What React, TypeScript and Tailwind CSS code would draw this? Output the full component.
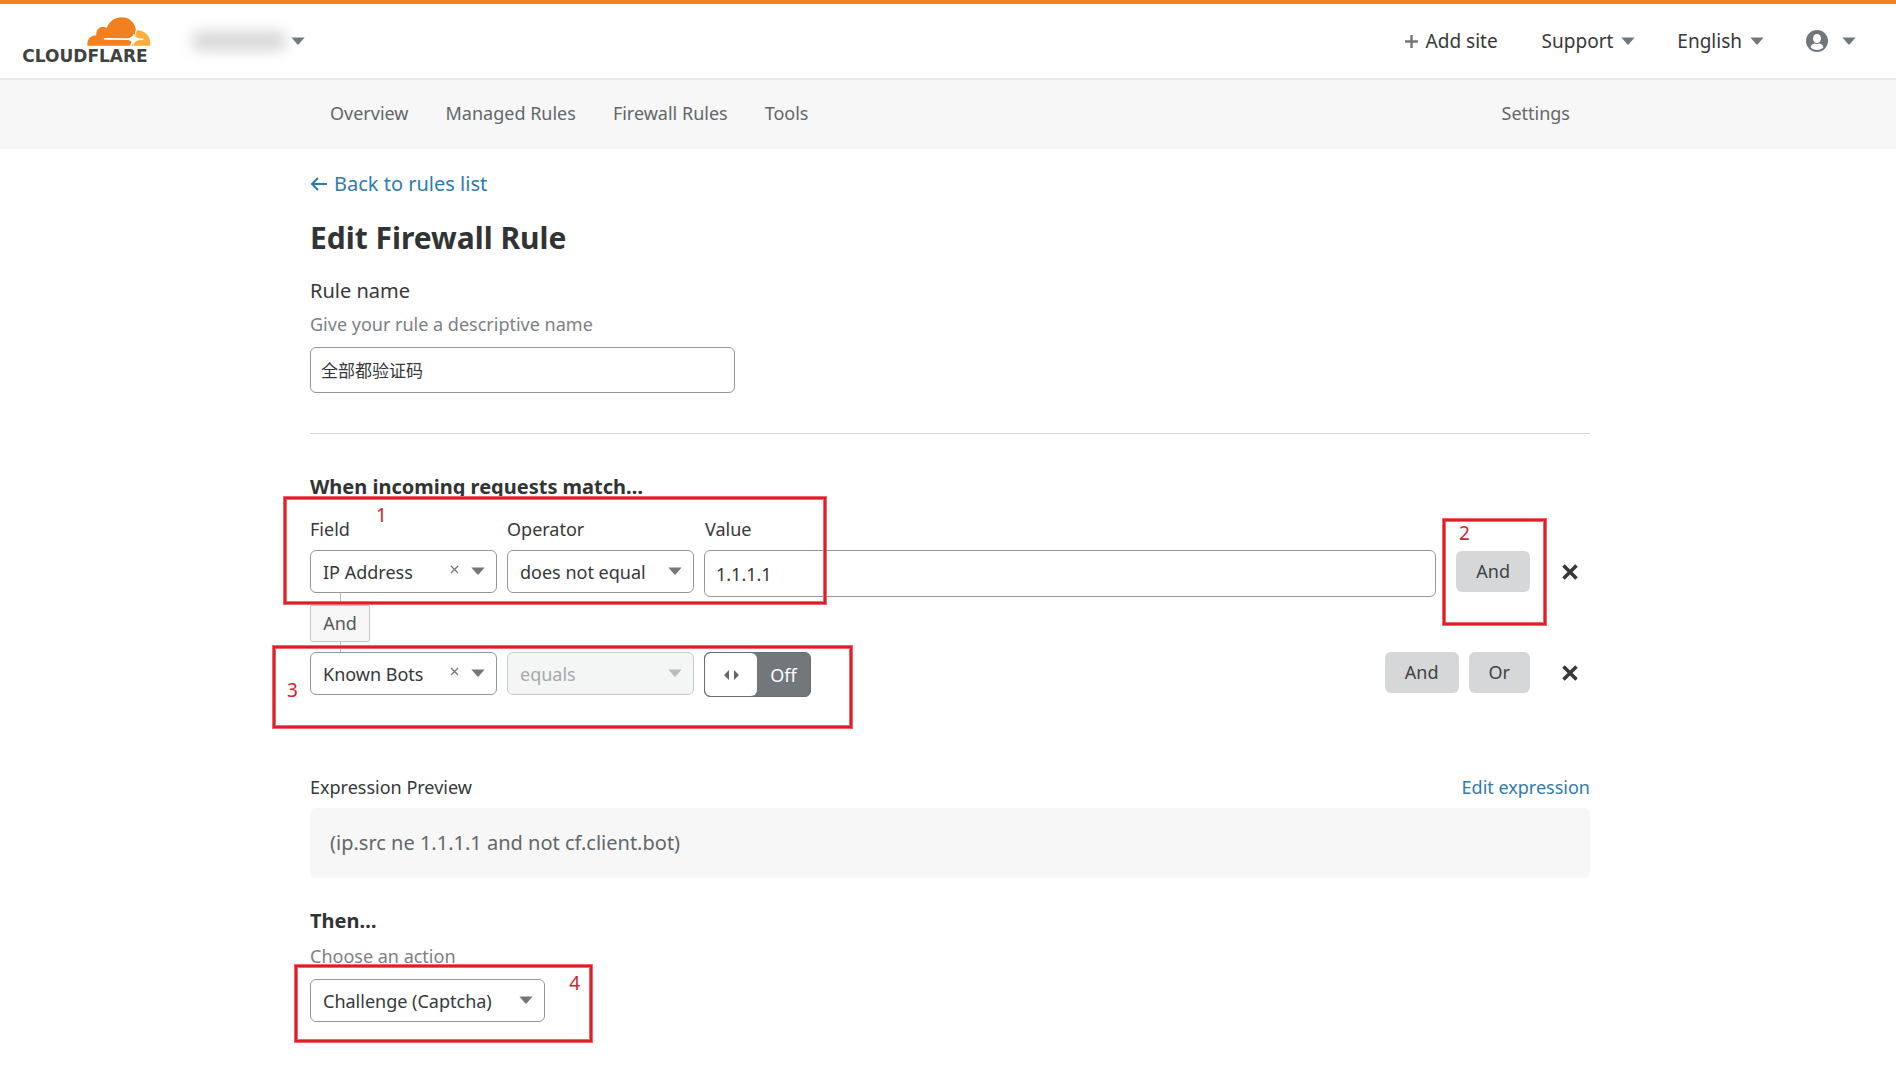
import type { ReactNode } from "react";

function Caret({ className = "" }: { className?: string }) {
  return (
    <svg aria-hidden="true" viewBox="0 0 14 8" className={`h-2 w-3.5 shrink-0 fill-current ${className}`}>
      <path d="M0.4 0.5h13.2L8 7.1a1.3 1.3 0 0 1-2 0z" />
    </svg>
  );
}

function Logo() {
  return (
    <a href="#home" aria-label="Cloudflare" className="flex w-33 flex-col">
      <svg aria-hidden="true" viewBox="262 50 192 88" className="h-[29px] w-16 self-end">
        <path
          fill="#f38020"
          d="M262 137.500C260 118 271 105 289 105C288 86 304 74 321 83C329 62 346 51 366 51C388 51 405 65 409 87L405 106L400 118L394 130L391 137.500Z"
        />
        <path fill="#faae40" d="M412 90C436 90 453 107 453 129V137.500H397L401 128L404 118L408 104Z" />
        <path
          fill="#fff"
          d="M312 116.500C312 114.500 314 114 317 114L384 114.500C393 114 399 110 403 101C406 110 411 114 419 114.500L430 115.500C434 116 434 119 430 119.500L418 120.500C410 122 405 126 401 135C398 126 394 121 385 120L317 119C314 119 312 118.500 312 116.500Z"
        />
      </svg>
      <span className="self-center font-['DejaVu_Sans'] text-[17px] leading-5 font-bold text-[#404242]">
        CLOUDFLARE
      </span>
    </a>
  );
}

function Select({
  label,
  id,
  value,
  width,
  disabled = false,
  clearable = false,
}: {
  label: string;
  id: string;
  value: string;
  width: string;
  disabled?: boolean;
  clearable?: boolean;
}) {
  return (
    <div className={`relative shrink-0 ${width}`}>
      <select
        id={id}
        aria-label={label}
        disabled={disabled}
        defaultValue={value}
        className="h-[43px] w-full appearance-none rounded-md border border-[#92979b] bg-white pt-0.5 pr-8 pl-3 text-[18px] text-[#36393a] disabled:border-[#c9cccd] disabled:bg-[#f4f5f5] disabled:text-[#a5a9ab] disabled:opacity-100"
      >
        <option>{value}</option>
      </select>
      {clearable && (
        <button type="button" aria-label={`Clear ${value}`} className="absolute top-[15px] right-9.5 text-[#72777b]">
          <svg aria-hidden="true" viewBox="0 0 9 9" className="size-[9px] stroke-current" strokeWidth="1.3">
            <path d="M1 1l7 7M8 1l-7 7" />
          </svg>
        </button>
      )}
      <Caret
        className={`pointer-events-none absolute top-[17px] right-3 ${disabled ? "text-[#b9bcbe]" : "text-[#72777b]"}`}
      />
    </div>
  );
}

function GreyButton({ children }: { children: ReactNode }) {
  return (
    <button type="button" className="h-[41px] rounded-md bg-[#d5d7d8] px-5 text-[18px] text-[#404344]">
      {children}
    </button>
  );
}

function RemoveButton() {
  return (
    <button type="button" aria-label="Remove condition" className="ml-8 text-[#36393a]">
      <svg aria-hidden="true" viewBox="0 0 16 16" className="size-4 stroke-current" strokeWidth="3.6">
        <path d="M1.500 1.500l13 13M14.500 1.500l-13 13" />
      </svg>
    </button>
  );
}

function Marker({ box, digit, children }: { box: string; digit: string; children: string }) {
  return (
    <div
      className={`pointer-events-none absolute border-2 border-[#dc1f26] ring-1 ring-[#f0666a] inset-ring inset-ring-[#f0666a] ${box}`}
    >
      <span className={`absolute font-['Noto_Sans'] text-[19px] leading-5 text-[#d0242b] ${digit}`}>{children}</span>
    </div>
  );
}

export default function App() {
  return (
    <div className="min-h-screen bg-white font-['Noto_Sans','Noto_Sans_CJK_SC',sans-serif] text-[18px] text-[#36393a]">
      <header className="flex h-20 items-center justify-between border-t-4 border-b-2 border-t-[#f38020] border-b-[#ebebeb] pr-10 pl-[19px]">
        <div className="flex items-center">
          <Logo />
          <button type="button" aria-label="Select account" className="ml-10 flex items-center gap-1 text-[#72777b]">
            <span className="h-5 w-24 rounded-full bg-[#d8d8d8] blur-[7px]" />
            <Caret />
          </button>
        </div>
        <nav aria-label="Account" className="flex items-center text-[19px]">
          <a href="#add-site" className="flex items-center gap-2">
            <svg aria-hidden="true" viewBox="0 0 13 13" className="size-[13px] stroke-[#72777b]" strokeWidth="2.400">
              <path d="M6.500 0v13M0 6.500h13" />
            </svg>
            Add site
          </a>
          <button type="button" className="ml-11 flex items-center gap-2">
            Support <Caret className="text-[#72777b]" />
          </button>
          <button type="button" className="ml-10.5 flex items-center gap-2">
            English <Caret className="text-[#72777b]" />
          </button>
          <button type="button" aria-label="Profile" className="ml-10.5 flex items-center gap-3.5 text-[#72777b]">
            <svg aria-hidden="true" viewBox="0 0 22 22" className="size-[22px]">
              <circle cx="11" cy="11" r="11" fill="currentColor" />
              <ellipse cx="11" cy="8.600" rx="4" ry="4.600" fill="#fff" />
              <path d="M4.600 17.200c.6-2.600 2.600-3.400 4.400-3.700 1.200.7 2.800.7 4 0 1.800.3 3.800 1.100 4.400 3.700-3.200 3.600-9.600 3.600-12.800 0z" fill="#fff" />
            </svg>
            <Caret />
          </button>
        </nav>
      </header>

      <div className="bg-[#f7f7f7] pl-1 text-[#62676a]">
        <nav aria-label="Firewall" className="mx-auto flex h-[69px] max-w-[1280px] items-center gap-[37px] px-5 pb-0.5">
          <a href="#overview">Overview</a>
          <a href="#managed">Managed Rules</a>
          <a href="#firewall">Firewall Rules</a>
          <a href="#tools">Tools</a>
          <a href="#settings" className="ml-auto">
            Settings
          </a>
        </nav>
      </div>

      <main className="pt-[21px] pb-10 pl-1">
        <form className="mx-auto max-w-[1280px]">
          <a href="#rules" className="flex items-center gap-1.5 text-[20px] leading-7 text-[#2f7bab]">
            <svg aria-hidden="true" viewBox="0 0 18 16" className="h-4 w-[18px] fill-none stroke-current" strokeWidth="2">
              <path d="M17 8H2.500M8 2L2 8l6 6" />
            </svg>
            Back to rules list
          </a>
          <h1 className="mt-5 text-[30px] leading-10 font-bold text-[#313435]">Edit Firewall Rule</h1>
          <label htmlFor="rule-name" className="mt-[19px] block text-[20px] leading-7">
            Rule name
          </label>
          <p className="mt-[7px] leading-6 text-[#7c8185]">Give your rule a descriptive name</p>
          <input
            id="rule-name"
            type="text"
            defaultValue="全部都验证码"
            className="mt-[11px] block h-[46px] w-[425px] rounded-md border border-[#92979b] px-2.5 pb-0.5 text-[17px]"
          />
          <hr className="mt-10 border-[#d5d7d8]" />

          <h2 className="mt-[39px] text-[20px] leading-7 font-bold text-[#313435]">When incoming requests match…</h2>
          <section aria-label="Conditions" className="relative mt-4">
            <div className="flex leading-6">
              <label htmlFor="field-1" className="w-[197px]">
                Field
              </label>
              <label htmlFor="operator-1" className="w-[198px]">
                Operator
              </label>
              <label htmlFor="value-1">Value</label>
            </div>
            <div className="mt-[9px] flex items-start">
              <div className="flex grow gap-2.5">
                <Select id="field-1" label="Field" value="IP Address" width="w-[187px]" clearable />
                <Select id="operator-1" label="Operator" value="does not equal" width="w-[187px]" />
                <input
                  id="value-1"
                  type="text"
                  defaultValue="1.1.1.1"
                  className="h-[47px] min-w-0 grow rounded-md border border-[#92979b] px-[11px] text-[18px]"
                />
              </div>
              <div className="ml-5 flex h-[43px] items-center pr-3">
                <GreyButton>And</GreyButton>
                <RemoveButton />
              </div>
            </div>
            <div className="-mt-1 flex h-[59px] w-[60px] flex-col items-center">
              <span className="h-3 w-px bg-[#b9bcbe]" />
              <span className="flex w-full grow items-center justify-center rounded-xs border border-[#c5c8c9] bg-[#f7f7f7] text-[#55595b]">
                And
              </span>
              <span className="h-2.5 w-px bg-[#b9bcbe]" />
            </div>
            <div className="flex items-start justify-between">
              <div className="flex gap-2.5">
                <Select id="field-2" label="Field" value="Known Bots" width="w-[187px]" clearable />
                <Select id="operator-2" label="Operator" value="equals" width="w-[187px]" disabled />
                <label className="flex h-[45px] w-[107px] overflow-hidden rounded-md border border-[#6a6f73] bg-[#72777b] text-white">
                  <input type="checkbox" role="switch" aria-label="Known Bots value" className="sr-only" />
                  <span className="flex w-[52px] items-center justify-center rounded-md bg-white text-[#62676a]">
                    <svg aria-hidden="true" viewBox="0 0 15 10" className="h-2.5 w-[15px] fill-current">
                      <path d="M5 0v10L0 5zM10 0v10l5-5z" />
                    </svg>
                  </span>
                  <span className="flex grow items-center justify-center pt-0.5">Off</span>
                </label>
              </div>
              <div className="flex h-[41px] items-center pr-3">
                <div className="flex gap-2.5">
                  <GreyButton>And</GreyButton>
                  <GreyButton>Or</GreyButton>
                </div>
                <RemoveButton />
              </div>
            </div>
            <Marker box="-top-5 -left-[26px] h-[107px] w-[542px]" digit="top-1.5 left-[90px]">
              1
            </Marker>
            <Marker box="top-0.5 right-[44px] h-[106px] w-[103px]" digit="top-0.5 left-3.5">
              2
            </Marker>
            <Marker box="top-[129px] -left-[37px] h-[82px] w-[579px]" digit="top-8 left-3">
              3
            </Marker>
          </section>

          <section aria-label="Expression" className="mt-[78px]">
            <div className="flex justify-between leading-6">
              <h3>Expression Preview</h3>
              <a href="#edit" className="text-[#2f7bab]">
                Edit expression
              </a>
            </div>
            <p className="mt-[9px] rounded-md bg-[#f7f7f7] px-5 py-5 text-[20px] leading-[30px] text-[#62676a]">
              (ip.src ne 1.1.1.1 and not cf.client.bot)
            </p>
          </section>

          <section className="relative mt-[29px]">
            <h2 className="text-[20px] leading-7 font-bold text-[#313435]">Then…</h2>
            <label htmlFor="action" className="mt-[9px] mb-[11px] block leading-6 text-[#7c8185]">
              Choose an action
            </label>
            <Select id="action" label="Choose an action" value="Challenge (Captcha)" width="w-[235px]" />
            <Marker box="top-[58px] -left-[15px] h-[77px] w-[297px]" digit="top-1.5 right-2.5">
              4
            </Marker>
          </section>
        </form>
      </main>
    </div>
  );
}
